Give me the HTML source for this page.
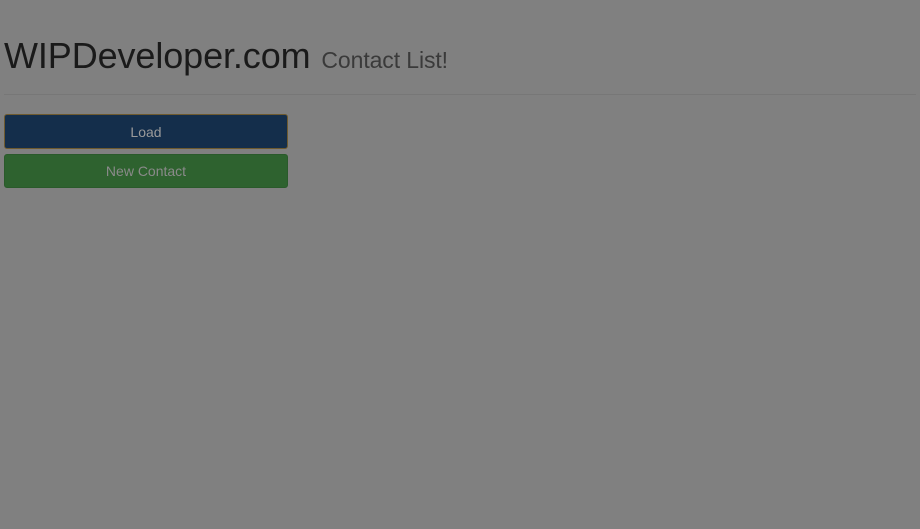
<!DOCTYPE html>
<html><head><style>
body{margin:0;background:#808080;width:920px;height:529px;overflow:hidden;font-family:"Liberation Sans",sans-serif;}
h1{position:absolute;left:4px;top:36px;margin:0;font-weight:normal;font-size:36px;color:#1a1a1a;line-height:40px;letter-spacing:-0.1px;}
h1 small{font-size:23px;color:#3a3a3a;margin-left:1px;}
.hr{position:absolute;left:4px;right:4px;top:94px;height:1px;background:#777;}
.btn{position:absolute;left:4px;width:284px;border-radius:3px;text-align:center;font-size:14px;color:#8a8a8a;box-sizing:border-box;}
.b1{top:114px;height:35px;line-height:34px;background:#142e4b;border:1px solid #6e5a2f;color:#9a9a9a;}
.b2{top:154px;height:34px;line-height:33px;background:#2e622f;border:1px solid #2a5a2b;}
</style></head><body>
<h1>WIPDeveloper.com <small>Contact List!</small></h1>
<div class="hr"></div>
<div class="btn b1">Load</div>
<div class="btn b2">New Contact</div>
</body></html>
